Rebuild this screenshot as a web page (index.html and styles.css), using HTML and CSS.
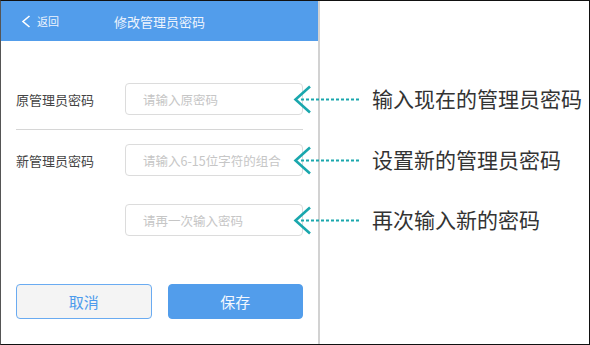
FILE: index.html
```html
<!DOCTYPE html>
<html lang="zh">
<head>
<meta charset="utf-8">
<link rel="stylesheet" href="styles.css">
</head>
<body>
<div class="frame">
  <div class="phone">
    <div class="header">
      <div class="back">
        <svg class="back-icon" width="10" height="13" viewBox="0 0 10 13"><path d="M8.5 1 L2 6.5 L8.5 12" fill="none" stroke="#fff" stroke-width="1.6"/></svg>
        <span>返回</span>
      </div>
      <div class="title">修改管理员密码</div>
    </div>
    <div class="form">
      <div class="row">
        <label class="label">原管理员密码</label>
        <input class="input" placeholder="请输入原密码">
      </div>
      <div class="divider"></div>
      <div class="row">
        <label class="label">新管理员密码</label>
        <input class="input" placeholder="请输入6-15位字符的组合">
      </div>
      <div class="row row3">
        <span class="label"></span>
        <input class="input" placeholder="请再一次输入密码">
      </div>
      <div class="buttons">
        <button class="btn cancel">取消</button>
        <button class="btn save">保存</button>
      </div>
    </div>
  </div>
  <div class="notes">
    <div class="note n1">
      <svg class="pointer" width="70" height="32" viewBox="0 0 70 32"><path d="M17 3.5 L2.5 16.5 L17 29.5" fill="none" stroke="#1aa7ad" stroke-width="2.6"/><line x1="8" y1="16.5" x2="68" y2="16.5" stroke="#1aa7ad" stroke-width="2" stroke-dasharray="3 2"/></svg>
      <span class="note-text">输入现在的管理员密码</span>
    </div>
    <div class="note n2">
      <svg class="pointer" width="70" height="32" viewBox="0 0 70 32"><path d="M17 3.5 L2.5 16.5 L17 29.5" fill="none" stroke="#1aa7ad" stroke-width="2.6"/><line x1="8" y1="16.5" x2="68" y2="16.5" stroke="#1aa7ad" stroke-width="2" stroke-dasharray="3 2"/></svg>
      <span class="note-text">设置新的管理员密码</span>
    </div>
    <div class="note n3">
      <svg class="pointer" width="70" height="32" viewBox="0 0 70 32"><path d="M17 3.5 L2.5 16.5 L17 29.5" fill="none" stroke="#1aa7ad" stroke-width="2.6"/><line x1="8" y1="16.5" x2="68" y2="16.5" stroke="#1aa7ad" stroke-width="2" stroke-dasharray="3 2"/></svg>
      <span class="note-text">再次输入新的密码</span>
    </div>
  </div>
</div>
</body>
</html>
```
FILE: styles.css
```css
* { box-sizing: border-box; }
html, body { margin: 0; padding: 0; background: #fff; }
body { font-family: "Noto Sans CJK SC", "Noto Sans", sans-serif; }

.frame {
  position: relative;
  width: 590px;
  height: 345px;
  border: 1px solid #111;
  border-left-color: #555;
  display: flex;
  background: #fff;
}

.phone {
  width: 319px;
  height: 100%;
  border-right: 2px solid #d2d2d2;
  display: flex;
  flex-direction: column;
}

.header {
  height: 40px;
  background: #529deb;
  display: flex;
  align-items: center;
  color: #eef4fd;
}
.back {
  display: flex;
  align-items: center;
  width: 58px;
  padding-left: 20px;
  font-size: 11px;
  gap: 6px;
}
.back-icon { display: block; }
.title {
  flex: 1;
  text-align: center;
  font-size: 13px;
  margin-right: 58px;
}

.form {
  padding: 42px 15px 0 15px;
  display: flex;
  flex-direction: column;
}
.row {
  display: grid;
  grid-template-columns: 109px 178px;
  align-items: center;
  height: 32px;
}
.row3 { margin-top: 28px; }
.label {
  font-size: 13px;
  color: #444;
}
.input {
  width: 178px;
  height: 32px;
  border: 1px solid #dcdcdc;
  border-radius: 4px;
  padding: 0 0 0 17px;
  font-family: inherit;
  font-size: 12.5px;
  outline: none;
  background: #fff;
}
.input::placeholder { color: #c6c6c6; }
.divider {
  height: 1px;
  background: #d6d6d6;
  margin: 14px 0;
}

.buttons {
  margin-top: 48px;
  display: flex;
  gap: 16px;
}
.btn {
  width: 136px;
  height: 35px;
  border-radius: 4px;
  font-family: inherit;
  font-size: 15px;
  padding: 0;
}
.cancel {
  background: #f4f4f4;
  border: 1px solid #6aabf1;
  color: #4d9bec;
}
.save {
  background: #529deb;
  border: 1px solid #529deb;
  color: #f4f8fe;
}

.notes {
  position: absolute;
  left: 292px;
  top: 82px;
  display: flex;
  flex-direction: column;
}
.note {
  display: flex;
  align-items: center;
  height: 32px;
}
.n2 { margin-top: 29px; }
.n3 { margin-top: 28px; }
.pointer { display: block; flex: none; }
.note-text {
  margin-left: 9px;
  font-size: 21px;
  color: #333;
  white-space: nowrap;
  line-height: 1;
  margin-top: -2px;
}
```
